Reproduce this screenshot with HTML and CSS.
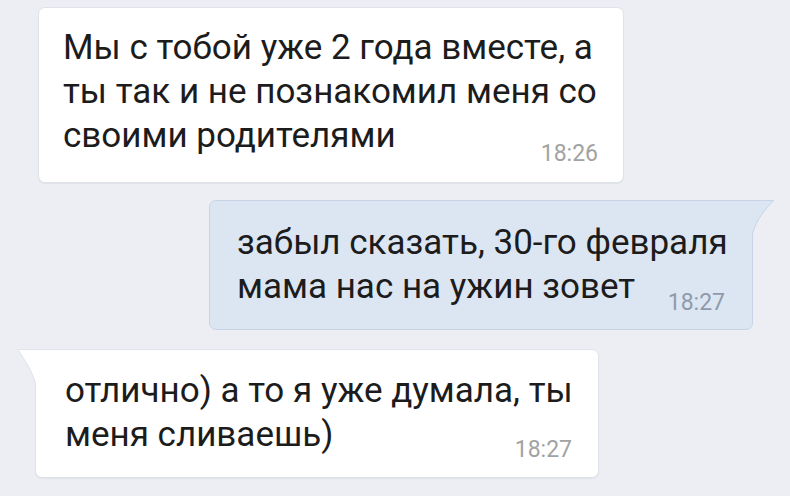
FILE: index.html
```html
<html lang="ru">
  <head>
    <meta charset="UTF-8" />
    <title>Чат</title>
    <link rel="stylesheet" href="styles.css">
  </head>
  <body>
    <div class="chat">
      <div class="msg msg-in">
        <p class="text">Мы с тобой уже 2 года вместе, а<br>ты так и не познакомил меня со<br>своими родителями</p>
        <span class="time">18:26</span>
      </div>

      <div class="msg msg-out">
        <svg class="tail tail-right" width="24" height="40" viewBox="0 0 24 40">
          <path class="tail-fill" d="M0 0.5 H22.5 C16 8 5 18 1 36 V0.5 Z" />
          <path class="tail-line" d="M0 0.5 H22.5 C16 8 5 18 1 36" />
        </svg>
        <p class="text">забыл сказать, 30-го февраля<br>мама нас на ужин зовет</p>
        <span class="time">18:27</span>
      </div>

      <div class="msg msg-in msg-tail">
        <svg class="tail tail-left" width="20" height="40" viewBox="0 0 20 40">
          <path class="tail-fill" d="M20 0.5 H1 C5 8 14 18 19 36 V0.5 Z" />
          <path class="tail-line" d="M20 0.5 H1 C5 8 14 18 19 36" />
        </svg>
        <p class="text">отлично) а то я уже думала, ты<br>меня сливаешь)</p>
        <span class="time">18:27</span>
      </div>
    </div>
  </body>
</html>
```

FILE: styles.css
```css
/* Page reset */
html,
body {
  margin: 0;
  padding: 0;
}
* {
  box-sizing: border-box;
}
body {
  font-family: Roboto, "Liberation Sans", sans-serif;
  background: #eceef3;
  color: #1c1c1c;
  height: 496px;
  overflow: hidden;
}
/* Column of messages */
.chat {
  display: flex;
  flex-direction: column;
  align-items: flex-start;
  padding-top: 7px;
}
/* One message bubble: text and time share one grid cell */
.msg {
  position: relative;
  display: grid;
  grid-template-columns: minmax(0, 1fr);
  border-radius: 7px;
}
.text,
.time {
  grid-area: 1 / 1;
}
.text {
  margin: 0;
  font-size: 35px;
  line-height: 44px;
  white-space: nowrap;
}
.time {
  justify-self: end;
  align-self: end;
  font-size: 23px;
  line-height: 26px;
  color: #a2a2a2;
}
/* Incoming (white) */
.msg-in {
  background: #fff;
  border: 1px solid #dfe2e8;
  box-shadow: 0 1px 1px rgba(0, 0, 0, 0.05);
  margin-left: 38px;
  width: 586px;
  padding: 18px 25px 24px 24px;
}
.msg-in .time {
  margin-bottom: -9px;
}
/* Outgoing (blue) */
.msg-out {
  background: #dce6f3;
  border: 1px solid #c7d4e5;
  border-top-right-radius: 0;
  margin: 17px 0 0 209px;
  width: 544px;
  padding: 20px 27px 20px 27px;
}
.msg-out .time {
  color: #8e9aab;
  margin-bottom: -7px;
}
/* Incoming with a tail */
.msg-in.msg-tail {
  border-top-left-radius: 0;
  margin: 19px 0 0 35px;
  width: 564px;
  padding: 19px 26px 20px 29px;
}
.msg-tail .time {
  margin-bottom: -6px;
}
/* Bubble tails */
.tail {
  position: absolute;
  top: -1px;
}
.tail-right {
  right: -23px;
}
.tail-left {
  left: -19px;
}
.tail-line {
  fill: none;
  stroke-width: 1;
}
.msg-out .tail-fill {
  fill: #dce6f3;
}
.msg-out .tail-line {
  stroke: #c7d4e5;
}
.msg-in .tail-fill {
  fill: #fff;
}
.msg-in .tail-line {
  stroke: #dfe2e8;
}
```
